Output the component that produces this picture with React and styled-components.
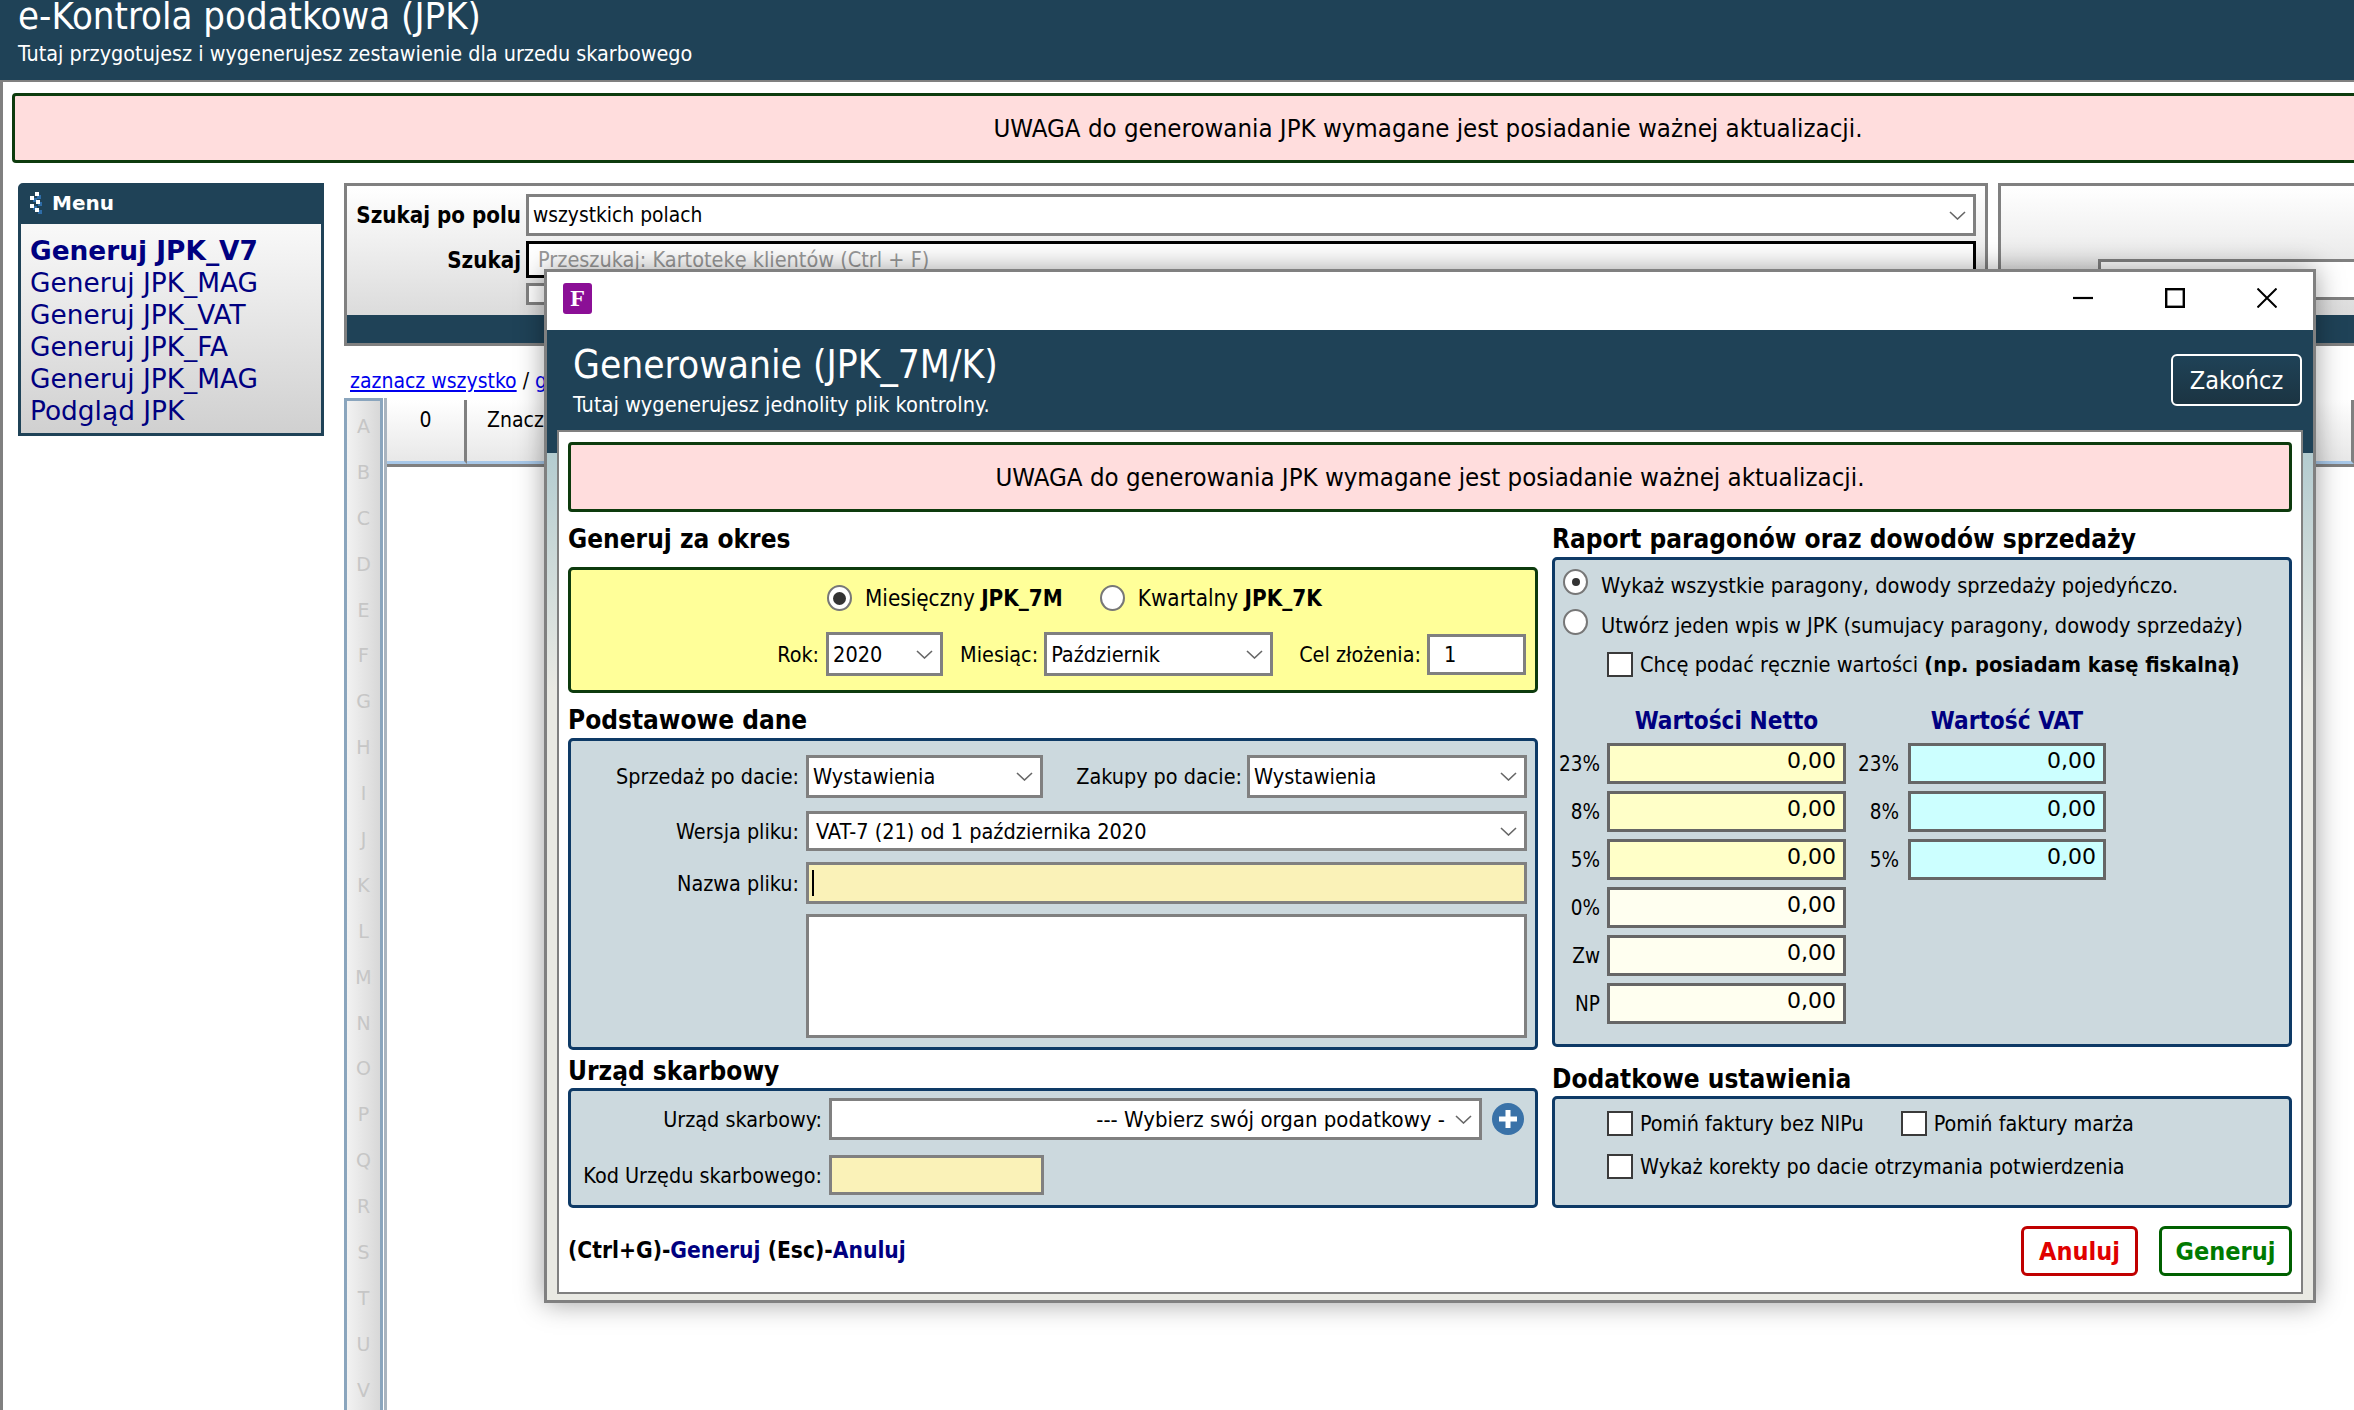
import React from 'react';
import styled, { createGlobalStyle } from 'styled-components';

const DARK = '#1f4257';
const GREY = '#808080';
const TAHOMA = '"DejaVu Sans Condensed", "DejaVu Sans", sans-serif';
const VERDANA = '"DejaVu Sans", sans-serif';

const Global = createGlobalStyle`
  html, body { margin: 0; padding: 0; background: #fff; overflow: hidden; }
  * { box-sizing: border-box; }
  body { font-family: ${TAHOMA}; font-size: 21px; color: #000; }
`;

const Page = styled.div`
  position: relative;
  width: 2354px;
  height: 1410px;
  overflow: hidden;
  background: #fff;
`;
const TopBar = styled.header`
  height: 82px;
  background: ${DARK};
  border-bottom: 2px solid ${GREY};
  padding-left: 18px;
  color: #fff;
  overflow: hidden;
`;
const PageTitle = styled.h1`
  margin: -2px 0 0;
  font-size: 38px;
  line-height: 37px;
  font-weight: 400;
  white-space: nowrap;
`;
const PageSub = styled.div`
  margin-top: 6px;
  font-size: 21.4px;
  line-height: 26px;
`;
const Body = styled.div`
  height: 1328px;
  border-left: 3px solid ${GREY};
  padding: 11px 0 0 9px;
`;
const Alert = styled.div`
  height: 70px;
  width: ${p => p.$w}px;
  background: #ffdddd;
  border: 3px solid #0d3b0d;
  border-radius: 4px;
  display: flex;
  align-items: center;
  justify-content: center;
  font-size: 25.6px;
  white-space: nowrap;
`;
const Main = styled.div`
  display: flex;
  gap: 20px;
  margin: 20px 0 0 6px;
`;
const Sidebar = styled.nav`
  width: 306px;
  height: 253px;
  flex: none;
  border: 3px solid ${DARK};
  border-radius: 5px 0 0 0;
  background: linear-gradient(#f8f8f8 0, #f8f8f8 42px, #d0d0d0 100%);
  font-family: ${VERDANA};
`;
const SideHead = styled.div`
  height: 39px;
  margin: -1px -1px 0;
  background: ${DARK};
  color: #fff;
  font-size: 20px;
  font-weight: 700;
  display: flex;
  align-items: center;
  gap: 10px;
  padding: 0 0 3px 8px;
`;
const SideList = styled.div`
  padding: 11px 0 0 9px;
`;
const SideItem = styled.div`
  height: 32px;
  line-height: 32px;
  font-size: 26.4px;
  font-weight: ${p => (p.$bold ? 700 : 400)};
  color: #000080;
  white-space: nowrap;
`;
const Center = styled.div`
  flex: 1;
  min-width: 0;
`;
const TopPanels = styled.div`
  display: flex;
  gap: 10px;
`;
const SearchPanel = styled.section`
  width: 1644px;
  height: 163px;
  flex: none;
  border: 3px solid ${GREY};
  background: linear-gradient(#fff, #d8d8d8 90%);
  display: flex;
  flex-direction: column;
  padding-top: 8px;
`;
const SearchRow = styled.div`
  display: flex;
  align-items: center;
  gap: 5px;
  padding-right: 9px;
  margin-top: ${p => p.$top || 0}px;
`;
const SearchLabel = styled.div`
  width: 174px;
  flex: none;
  text-align: right;
  font-weight: 700;
  font-size: 22.2px;
  white-space: nowrap;
`;
const Box = styled.div`
  display: flex;
  align-items: center;
  flex: ${p => (p.$w ? 'none' : 1)};
  width: ${p => (p.$w ? `${p.$w}px` : 'auto')};
  height: ${p => p.$h}px;
  min-width: 0;
  background: ${p => p.$bg || '#fff'};
  border: 3px solid ${p => p.$line || GREY};
  padding: 0 7px 0 ${p => p.$in ?? 4}px;
  font-size: 21.5px;
  white-space: nowrap;
  overflow: hidden;
`;
const Value = styled.span`
  flex: 1;
  min-width: 0;
  padding-left: ${p => p.$pad || 0}px;
  padding-right: ${p => (p.$right ? 6 : 0)}px;
  text-align: ${p => (p.$right ? 'right' : 'left')};
  font-size: ${p => p.$size || 21.5}px;
  color: ${p => p.$color || '#000'};
  overflow: hidden;
`;
const Chevron = styled.svg`
  width: 17px;
  height: 9px;
  flex: none;
  margin-left: 4px;
`;
const Caret = styled.span`
  display: block;
  width: 2px;
  height: 26px;
  background: #000;
`;
const Bar = styled.div`
  height: 28px;
  margin-top: auto;
  background: ${DARK};
`;
const RightPanel = styled.section`
  flex: none;
  width: 400px;
  height: 163px;
  border: 3px solid ${GREY};
  background: linear-gradient(#fff, #d8d8d8 90%);
  display: flex;
  flex-direction: column;
`;
const RightInner = styled.div`
  height: 41px;
  margin: 73px 0 0 97px;
  background: #fff;
  border: 3px solid ${GREY};
  border-right: 0;
`;
const LinkRow = styled.div`
  height: 52px;
  padding: 22px 0 0 6px;
  font-size: 21px;
  line-height: 26px;
  white-space: nowrap;
`;
const Anchor = styled.span`
  color: #0000ee;
  text-decoration: underline;
`;
const GridRow = styled.div`
  display: flex;
  gap: 1px;
`;
const Alpha = styled.div`
  width: 39px;
  height: 1020px;
  flex: none;
  border: 3px solid #8aa5bd;
  border-bottom: 0;
  padding-top: 3px;
  background: linear-gradient(90deg, #f2f2f2, #d8d8d8);
  overflow: hidden;
`;
const Letter = styled.div`
  height: 45.9px;
  line-height: 45.9px;
  text-align: center;
  font-family: ${VERDANA};
  font-size: 19px;
  color: #c6c6c6;
`;
const Table = styled.div`
  flex: 1;
  height: 1020px;
  border-left: 3px solid #a9b4bf;
  padding-top: 2px;
`;
const TableHead = styled.div`
  display: flex;
  height: 67px;
  border-bottom: 3px solid ${GREY};
`;
const HeadCell = styled.div`
  flex: ${p => (p.$w ? 'none' : 1)};
  width: ${p => p.$w || 0}px;
  padding: 7px ${p => p.$padR || 0}px 0 ${p => p.$padL || 0}px;
  text-align: ${p => p.$align || 'left'};
  font-size: 21px;
  line-height: 26px;
  background: linear-gradient(#fff, #e8e8e8);
  border-bottom: 3px solid #a8c8e8;
  border-right: 3px solid ${GREY};
  white-space: nowrap;
`;

/* dialog */
const Dialog = styled.div`
  position: absolute;
  left: 544px;
  top: 269px;
  width: 1772px;
  height: 1034px;
  border: 3px solid ${GREY};
  box-shadow: 0 0 26px rgba(0, 0, 0, 0.38);
  display: flex;
  flex-direction: column;
  background: #e9e9e3;
`;
const TitleBar = styled.div`
  height: 58px;
  flex: none;
  background: #fff;
  display: flex;
  align-items: flex-start;
  padding: 11px 36px 0 16px;
`;
const AppIcon = styled.div`
  width: 29px;
  height: 31px;
  background: #8b0f96;
  border-radius: 3px;
  color: #fff;
  font-family: "Liberation Serif", serif;
  font-weight: 700;
  font-size: 24px;
  line-height: 31px;
  text-align: center;
`;
const Controls = styled.div`
  margin: 5px 0 0 auto;
  display: flex;
  gap: 72px;
`;
const WinIcon = styled.svg`
  width: 20px;
  height: 20px;
  display: block;
`;
const DlgHead = styled.div`
  height: 100px;
  flex: none;
  background: ${DARK};
  color: #fff;
  display: flex;
  justify-content: space-between;
  padding: 15px 11px 0 26px;
`;
const DlgTitle = styled.div`
  font-size: 38.6px;
  line-height: 40px;
  white-space: nowrap;
`;
const DlgSub = styled.div`
  margin-top: 7px;
  font-size: 21.6px;
  line-height: 26px;
  white-space: nowrap;
`;
const Finish = styled.div`
  width: 131px;
  height: 52px;
  margin-top: 9px;
  border: 2px solid #fff;
  border-radius: 6px;
  background: linear-gradient(${DARK}, #1b3442);
  font-size: 25px;
  display: flex;
  align-items: center;
  justify-content: center;
`;
const Frame = styled.div`
  flex: 1;
  min-height: 0;
  padding: 0 10px 6px 10px;
  background: linear-gradient(${DARK} 0, ${DARK} 23px, #b4ccd0 23px, #e9e9e3 260px);
`;
const Content = styled.div`
  height: 100%;
  background: #fff;
  border: 2px solid ${GREY};
  padding: 10px 9px 0 9px;
`;
const Columns = styled.div`
  display: grid;
  grid-template-columns: 970px 740px;
  column-gap: 14px;
  margin-top: 12px;
`;
const Col = styled.div`
  display: flex;
  flex-direction: column;
  min-width: 0;
`;
const Heading = styled.h2`
  margin: ${p => p.$top || 0}px 0 ${p => p.$bottom}px;
  font-size: 26px;
  line-height: 30px;
  font-weight: 700;
  white-space: nowrap;
`;
const Group = styled.div`
  height: ${p => p.$h}px;
  flex: none;
  background: ${p => (p.$yellow ? '#ffff99' : '#ccd9de')};
  border: 3px solid ${p => (p.$yellow ? '#0d3b0d' : '#0e3a66')};
  border-radius: 5px;
  padding: ${p => p.$pad || '0'};
`;
const CheckRow = styled.div`
  display: flex;
  align-items: center;
  height: ${p => p.$h || 26}px;
  margin-top: ${p => p.$top || 0}px;
  gap: ${p => p.$gap ?? 7}px;
  padding-left: ${p => p.$left || 0}px;
  justify-content: ${p => (p.$end ? 'flex-end' : 'flex-start')};
  font-size: ${p => p.$size || 21.6}px;
  white-space: nowrap;
`;
const Radio = styled.span`
  width: 25px;
  height: 26px;
  flex: none;
  border-radius: 50%;
  border: 2px solid #777;
  background: #fff;
  display: flex;
  align-items: center;
  justify-content: center;
  &::after {
    content: '';
    display: ${p => (p.$on ? 'block' : 'none')};
    width: ${p => p.$dot || 13}px;
    height: ${p => p.$dot || 13}px;
    border-radius: 50%;
    background: #333;
  }
`;
const Check = styled.span`
  width: 26px;
  height: 25px;
  flex: none;
  background: #fff;
  border: 2px solid #3a3a3a;
  margin-left: ${p => p.$left || 0}px;
`;
const RadioText = styled.span`
  padding-top: ${p => p.$shift || 0}px;
`;
const Option = styled.span`
  display: flex;
  align-items: center;
  gap: 13px;
  margin-left: ${p => p.$left || 0}px;
`;
const Inline = styled.span`
  display: flex;
  align-items: center;
  gap: ${p => p.$gap || 6}px;
  margin-left: ${p => p.$left || 0}px;
`;
const FormRow = styled.div`
  display: flex;
  align-items: center;
  margin-top: ${p => p.$top || 0}px;
  font-size: 21.4px;
  white-space: nowrap;
`;
const FieldLabel = styled.span`
  width: ${p => p.$w}px;
  flex: none;
  text-align: right;
  margin-right: ${p => p.$gap || 7}px;
`;
const PlusWrap = styled.svg`
  width: 32px;
  height: 32px;
  flex: none;
  margin-left: 10px;
`;
const Shortcut = styled.div`
  margin-top: 27px;
  font-size: 22.6px;
  line-height: 30px;
  font-weight: 700;
`;
const Navy = styled.span`
  color: #000080;
`;
const Rates = styled.div`
  display: grid;
  grid-template-columns: 45px 239px 48px 198px;
  grid-template-rows: 30px repeat(6, 41px);
  column-gap: 7px;
  row-gap: 7px;
  margin: 29px 0 0 -8px;
`;
const RatesHead = styled.div`
  grid-column: ${p => p.$col};
  grid-row: 1;
  align-self: center;
  text-align: center;
  color: #000080;
  font-size: 24.2px;
  font-weight: 700;
  white-space: nowrap;
`;
const Rate = styled.div`
  grid-column: ${p => p.$col};
  grid-row: ${p => p.$row};
  align-self: center;
  text-align: right;
  padding-right: ${p => p.$pad || 0}px;
  font-size: 20.5px;
  white-space: nowrap;
`;
const Amount = styled.div`
  grid-column: ${p => p.$col};
  grid-row: ${p => p.$row};
  border: 3px solid #666;
  background: ${p => p.$bg};
  font-family: ${VERDANA};
  font-size: 22px;
  line-height: 29px;
  text-align: right;
  padding-right: 7px;
`;
const ButtonRow = styled.div`
  display: flex;
  justify-content: flex-end;
  gap: 21px;
  margin-top: 18px;
`;
const Action = styled.div`
  width: ${p => p.$w}px;
  height: 50px;
  background: #fff;
  border: 3px solid ${p => p.$line};
  border-radius: 6px;
  color: ${p => p.$color};
  font-size: 25px;
  font-weight: 700;
  display: flex;
  align-items: center;
  justify-content: center;
`;

const Down = () => (
  <Chevron viewBox="0 0 17 9">
    <path d="M1 1 L8.5 8 L16 1" fill="none" stroke="#666" strokeWidth="1.6" />
  </Chevron>
);

const Grip = () => (
  <svg width="14" height="22" viewBox="0 0 14 22">
    <g fill="#2f6da8">
      <rect x="9" y="3" width="4" height="4" />
      <rect x="5" y="6" width="4" height="4" />
      <rect x="10" y="10" width="4" height="4" />
      <rect x="5" y="14" width="4" height="4" />
      <rect x="10" y="18" width="4" height="4" />
    </g>
    <g fill="#fff">
      <rect x="7" y="0" width="4" height="4" />
      <rect x="2" y="4" width="4" height="4" />
      <rect x="8" y="8" width="4" height="4" />
      <rect x="2" y="12" width="4" height="4" />
      <rect x="7" y="16" width="4" height="4" />
    </g>
  </svg>
);

const NETTO = [
  ['23%', '#ffffc8'], ['8%', '#ffffc8'], ['5%', '#ffffc8'],
  ['0%', '#fffff0'], ['Zw', '#fffff0'], ['NP', '#fffff0'],
];
const LETTERS = 'ABCDEFGHIJKLMNOPQRSTUV'.split('');
const MENU = ['Generuj JPK_MAG', 'Generuj JPK_VAT', 'Generuj JPK_FA', 'Generuj JPK_MAG', 'Podgląd JPK'];

export default function App() {
  const notice = 'UWAGA do generowania JPK wymagane jest posiadanie ważnej aktualizacji.';
  return (
    <Page>
      <Global />
      <TopBar>
        <PageTitle>e-Kontrola podatkowa (JPK)</PageTitle>
        <PageSub>Tutaj przygotujesz i wygenerujesz zestawienie dla urzedu skarbowego</PageSub>
      </TopBar>
      <Body>
        <Alert $w={2832}>{notice}</Alert>
        <Main>
          <Sidebar>
            <SideHead><Grip />Menu</SideHead>
            <SideList>
              <SideItem $bold>Generuj JPK_V7</SideItem>
              {MENU.map((m, i) => <SideItem key={i}>{m}</SideItem>)}
            </SideList>
          </Sidebar>
          <Center>
            <TopPanels>
              <SearchPanel>
                <SearchRow>
                  <SearchLabel>Szukaj po polu</SearchLabel>
                  <Box $h={42}><Value $size={20.8}>wszystkich polach</Value><Down /></Box>
                </SearchRow>
                <SearchRow $top={5}>
                  <SearchLabel>Szukaj</SearchLabel>
                  <Box $h={37} $line="#000"><Value $pad={5} $color="#999">Przeszukaj: Kartotekę klientów (Ctrl + F)</Value></Box>
                </SearchRow>
                <SearchRow $top={5}>
                  <SearchLabel />
                  <Box $w={25} $h={22} />
                </SearchRow>
                <Bar />
              </SearchPanel>
              <RightPanel>
                <RightInner />
                <Bar />
              </RightPanel>
            </TopPanels>
            <LinkRow><Anchor>zaznacz wszystko</Anchor> / <Anchor>g</Anchor></LinkRow>
            <GridRow>
              <Alpha>{LETTERS.map(l => <Letter key={l}>{l}</Letter>)}</Alpha>
              <Table>
                <TableHead>
                  <HeadCell $w={80} $align="center">0</HeadCell>
                  <HeadCell $padL={20}>Znacz</HeadCell>
                  <HeadCell $w={120} $align="right" $padR={6}>do</HeadCell>
                  <HeadCell $w={40} />
                </TableHead>
              </Table>
            </GridRow>
          </Center>
        </Main>
      </Body>

      <Dialog>
        <TitleBar>
          <AppIcon>F</AppIcon>
          <Controls>
            <WinIcon viewBox="0 0 20 20"><path d="M0 10H20" stroke="#000" strokeWidth="2.2" /></WinIcon>
            <WinIcon viewBox="0 0 20 20"><rect x="1.2" y="1.2" width="17.6" height="17.6" fill="none" stroke="#000" strokeWidth="2.4" /></WinIcon>
            <WinIcon viewBox="0 0 20 20"><path d="M0.5 0.5L19.5 19.5M19.5 0.5L0.5 19.5" stroke="#000" strokeWidth="2" /></WinIcon>
          </Controls>
        </TitleBar>
        <DlgHead>
          <div>
            <DlgTitle>Generowanie (JPK_7M/K)</DlgTitle>
            <DlgSub>Tutaj wygenerujesz jednolity plik kontrolny.</DlgSub>
          </div>
          <Finish>Zakończ</Finish>
        </DlgHead>
        <Frame>
          <Content>
            <Alert $w={1724}>{notice}</Alert>
            <Columns>
              <Col>
                <Heading $bottom={13}>Generuj za okres</Heading>
                <Group $h={126} $yellow $pad="15px 9px 0 0">
                  <CheckRow $left={256} $gap={0} $size={22.3}>
                    <Option><Radio $on /><span>Miesięczny <b>JPK_7M</b></span></Option>
                    <Option $left={37}><Radio /><span>Kwartalny <b>JPK_7K</b></span></Option>
                  </CheckRow>
                  <CheckRow $h={44} $top={21} $end $gap={0} $size={21.4}>
                    <Inline $gap={7}>Rok:<Box $w={117} $h={44}><Value>2020</Value><Down /></Box></Inline>
                    <Inline $left={17}>Miesiąc:<Box $w={229} $h={44}><Value>Październik</Value><Down /></Box></Inline>
                    <Inline $left={26}>Cel złożenia:<Box $w={99} $h={41}><Value $pad={10}>1</Value></Box></Inline>
                  </CheckRow>
                </Group>

                <Heading $top={12} $bottom={3}>Podstawowe dane</Heading>
                <Group $h={312} $pad="14px 8px 0 0">
                  <FormRow>
                    <FieldLabel $w={228}>Sprzedaż po dacie:</FieldLabel>
                    <Box $w={237} $h={43}><Value>Wystawienia</Value><Down /></Box>
                    <FieldLabel $w={199} $gap={5}>Zakupy po dacie:</FieldLabel>
                    <Box $h={43}><Value>Wystawienia</Value><Down /></Box>
                  </FormRow>
                  <FormRow $top={13}>
                    <FieldLabel $w={228}>Wersja pliku:</FieldLabel>
                    <Box $h={40}><Value $pad={3}>VAT-7 (21) od 1 października 2020</Value><Down /></Box>
                  </FormRow>
                  <FormRow $top={11}>
                    <FieldLabel $w={228}>Nazwa pliku:</FieldLabel>
                    <Box $h={42} $bg="#faf2b8" $in={3}><Caret /></Box>
                  </FormRow>
                  <FormRow $top={10}>
                    <FieldLabel $w={228} />
                    <Box $h={124} />
                  </FormRow>
                </Group>

                <Heading $top={6} $bottom={2}>Urząd skarbowy</Heading>
                <Group $h={120} $pad="7px 0 0 0">
                  <FormRow>
                    <FieldLabel $w={251}>Urząd skarbowy:</FieldLabel>
                    <Box $w={653} $h={42}><Value $right $size={22}>--- Wybierz swój organ podatkowy -</Value><Down /></Box>
                    <PlusWrap viewBox="0 0 32 32">
                      <circle cx="16" cy="16" r="16" fill="#3a72a8" />
                      <path d="M16 7V25M7 16H25" stroke="#fff" strokeWidth="5" />
                    </PlusWrap>
                  </FormRow>
                  <FormRow $top={15}>
                    <FieldLabel $w={251}>Kod Urzędu skarbowego:</FieldLabel>
                    <Box $w={215} $h={40} $bg="#faf2b8" />
                  </FormRow>
                </Group>
                <Shortcut>(Ctrl+G)-<Navy>Generuj</Navy> (Esc)-<Navy>Anuluj</Navy></Shortcut>
              </Col>

              <Col>
                <Heading $bottom={3}>Raport paragonów oraz dowodów sprzedaży</Heading>
                <Group $h={490} $pad="9px 0 0 8px">
                  <CheckRow $gap={13}>
                    <Radio $on $dot={8} />
                    <RadioText $shift={6}>Wykaż wszystkie paragony, dowody sprzedaży pojedyńczo.</RadioText>
                  </CheckRow>
                  <CheckRow $top={14} $gap={13}>
                    <Radio />
                    <RadioText $shift={6}>Utwórz jeden wpis w JPK (sumujacy paragony, dowody sprzedaży)</RadioText>
                  </CheckRow>
                  <CheckRow $top={16} $left={44}>
                    <Check />
                    <span>Chcę podać ręcznie wartości <b>(np. posiadam kasę fiskalną)</b></span>
                  </CheckRow>
                  <Rates>
                    <RatesHead $col={2}>Wartości Netto</RatesHead>
                    <RatesHead $col={4}>Wartość VAT</RatesHead>
                    {NETTO.map(([label, bg], i) => (
                      <React.Fragment key={label}>
                        <Rate $col={1} $row={i + 2}>{label}</Rate>
                        <Amount $col={2} $row={i + 2} $bg={bg}>0,00</Amount>
                        {i < 3 && <Rate $col={3} $row={i + 2} $pad={2}>{label}</Rate>}
                        {i < 3 && <Amount $col={4} $row={i + 2} $bg="#ccffff">0,00</Amount>}
                      </React.Fragment>
                    ))}
                  </Rates>
                </Group>

                <Heading $top={17} $bottom={2}>Dodatkowe ustawienia</Heading>
                <Group $h={112} $pad="11px 0 0 52px">
                  <CheckRow $size={21.4}>
                    <Check /><span>Pomiń faktury bez NIPu</span>
                    <Check $left={30} /><span>Pomiń faktury marża</span>
                  </CheckRow>
                  <CheckRow $top={17} $size={21.4}>
                    <Check /><span>Wykaż korekty po dacie otrzymania potwierdzenia</span>
                  </CheckRow>
                </Group>
                <ButtonRow>
                  <Action $w={117} $line="#c00000" $color="#e00000">Anuluj</Action>
                  <Action $w={133} $line="#006000" $color="#007a00">Generuj</Action>
                </ButtonRow>
              </Col>
            </Columns>
          </Content>
        </Frame>
      </Dialog>
    </Page>
  );
}
